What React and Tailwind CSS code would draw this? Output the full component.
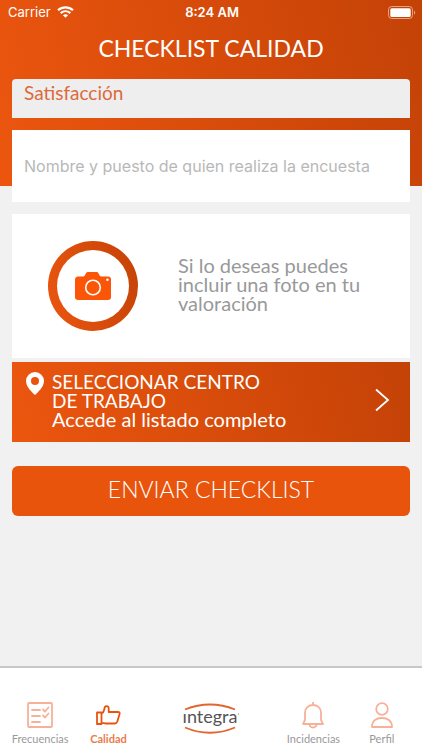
import { useState } from 'react';
import clsx from 'clsx';

const WifiIcon = () => (
  <svg width="17" height="12" viewBox="0 0 17 12" fill="none" stroke="currentColor" strokeWidth="2.2" aria-hidden="true">
    <path d="M1 4.2C5.2.3 11.8.3 16 4.2" />
    <path d="M3.7 7.1c2.8-2.5 6.8-2.5 9.6 0" />
    <path d="M8.5 11.8 5.9 9.2c1.5-1.3 3.7-1.3 5.2 0z" fill="currentColor" stroke="none" />
  </svg>
);

const BatteryIcon = () => (
  <svg width="28" height="13" viewBox="0 0 28 13" fill="none" aria-hidden="true">
    <rect x=".5" y=".5" width="24" height="12" rx="3.2" stroke="#fff" strokeOpacity=".5" />
    <rect x="2.3" y="2.3" width="20.4" height="8.6" rx="1.5" fill="#fff" />
    <path d="M26 4.4c1.6.6 1.6 3.6 0 4.2z" fill="#fff" fillOpacity=".5" />
  </svg>
);

const CameraIcon = () => (
  <svg width="38" height="30" viewBox="0 0 38 30" aria-hidden="true">
    <path d="M3.5 5.5H9c1.2 0 1.7-.7 2.200-1.700l.7-1.500C12.500 1.300 13.300 1 14.300 1h7.900c1 0 1.800.4 2.300 1.300l.8 1.500c.5 1 1 1.700 2.200 1.700h6.700A3 3 0 0 1 37 8.500V26a3 3 0 0 1-3 3H4a3 3 0 0 1-3-3V8.500a3 3 0 0 1 2.500-3z" fill="#fb5607" />
    <circle cx="19" cy="16.5" r="7.3" fill="none" stroke="#fff" strokeWidth="1.6" />
    <circle cx="33.5" cy="8.8" r="1.3" fill="#fff" />
  </svg>
);

const PinIcon = () => (
  <svg width="18" height="24" viewBox="0 0 18 24" className="shrink-0" aria-hidden="true">
    <path fill="#fff" fillRule="evenodd" d="M9 0a9 9 0 0 0-9 9c0 6.200 6.500 11.500 9 14 2.500-2.500 9-7.800 9-14a9 9 0 0 0-9-9zm0 5a4 4 0 1 1 0 8 4 4 0 0 1 0-8z" />
  </svg>
);

const ListIcon = () => (
  <svg width="26" height="26" viewBox="0 0 26 26" fill="none" stroke="currentColor" strokeWidth="1.8" strokeLinecap="round" strokeLinejoin="round" aria-hidden="true">
    <rect x="1" y="1" width="24" height="24" rx="1" />
    <path d="M5 8h8M5 14h8M5 20h8M16 7.500l2 2L21.500 5.500M16 13.500l2 2 3.500-4" />
  </svg>
);

const ThumbIcon = () => (
  <svg width="26" height="26" viewBox="0 0 26 26" fill="none" stroke="currentColor" strokeWidth="1.8" strokeLinejoin="round" aria-hidden="true">
    <path d="M2 10.500h4.500v11.500H2zM6.500 11.500C9 10.500 9 9 9.500 6.500c.3-3.400 4-3 4.200-.2V10H23c1.500 0 2 .8 1.600 2l-2.300 7.500c-.5 1.500-1 2-2.500 2h-9c-1.500 0-2.300-.7-4.300-.7" />
  </svg>
);

const BellIcon = () => (
  <svg width="24" height="28" viewBox="0 0 24 28" fill="none" stroke="currentColor" strokeWidth="1.8" strokeLinejoin="round" aria-hidden="true">
    <path d="M12 1v3M2 23h20l-2-4v-7.500C20 7 16.500 4 12 4s-8 3-8 7.500V19zM8.500 23.500c.5 4 6.500 4 7 0" />
  </svg>
);

const UserIcon = () => (
  <svg width="24" height="26" viewBox="0 0 24 26" fill="none" stroke="currentColor" strokeWidth="1.8" strokeLinejoin="round" aria-hidden="true">
    <circle cx="12" cy="7" r="5.800" />
    <path d="M2 25c0-6 4-9 10-9s10 3 10 9z" />
  </svg>
);

const NavItem = ({ icon: Icon, label, href, active }) => (
  <a
    href={href}
    aria-current={active ? 'page' : undefined}
    className={clsx('flex flex-1 flex-col items-center', active ? 'text-[#e8540f]' : 'text-[#f7b199]')}
  >
    <span className="flex h-7 items-center"><Icon /></span>
    <span className={clsx('mt-1 text-[11px] leading-3', active ? 'font-bold text-[#e97c4d]' : 'text-[#999]')}>{label}</span>
  </a>
);

const App = () => {
  const [name, setName] = useState('');

  return (
    <div className="flex min-h-screen flex-col bg-[#f1f1f1] font-['Lato',sans-serif]">
      {/* Header */}
      <header className="h-[186px] bg-linear-75 from-[#ec560f] to-[#c44207] text-white">
        <div className="grid h-6 grid-cols-3 items-center pl-2 pr-1.5 font-['Inter',sans-serif] text-[13px] leading-6">
          <span className="flex items-center gap-1.5">Carrier <WifiIcon /></span>
          <span className="text-center font-semibold">8:24 AM</span>
          <span className="flex justify-end"><BatteryIcon /></span>
        </div>
        <h1 className="mt-2.5 text-center text-[23px] leading-7">CHECKLIST CALIDAD</h1>
      </header>

      <main className="-mt-[107px] flex flex-1 flex-col px-3 pb-6">
        <section className="h-[39px] rounded-t bg-[#eee] px-3">
          <h2 className="pt-1 text-[19px] leading-5 text-[#dc6a3a]">Satisfacción</h2>
        </section>

        <input
          type="text"
          aria-label="Nombre y puesto de quien realiza la encuesta"
          placeholder="Nombre y puesto de quien realiza la encuesta"
          value={name}
          onChange={(e) => setName(e.target.value)}
          className="mt-3 h-[72px] w-full bg-white px-3 font-['Inter',sans-serif] text-[16px] text-gray-700 outline-none placeholder:text-[#b8b8b8]"
        />

        {/* Photo */}
        <section className="mt-3 flex h-36 items-center bg-white pl-9 pr-3">
          <button
            type="button"
            aria-label="Incluir una foto"
            className="size-[90px] shrink-0 rounded-full bg-linear-75 from-[#ec560f] to-[#c44207] p-[9px]"
          >
            <span className="flex size-full items-center justify-center rounded-full bg-white"><CameraIcon /></span>
          </button>
          <p className="ml-10 pb-1 text-[20px] leading-[19px] text-[#999]">
            Si lo deseas puedes<br />incluir una foto en tu<br />valoración
          </p>
        </section>

        <button
          type="button"
          className="mt-1 flex h-20 items-start bg-linear-75 from-[#ec560f] to-[#c44207] pl-3.5 pr-5 pt-2.5 text-left text-[19px] leading-[19px] text-white"
        >
          <PinIcon />
          <span className="ml-2 flex-1">
            <span className="block">SELECCIONAR CENTRO<br />DE TRABAJO</span>
            <span className="block text-[20px]">Accede al listado completo</span>
          </span>
          <svg width="16" height="24" viewBox="0 0 16 24" className="mt-4" fill="none" stroke="#fff" strokeWidth="1.8" aria-hidden="true">
            <path d="m2 1.500 12 10.500L2 22.500" />
          </svg>
        </button>

        <button type="button" className="mt-6 h-[50px] rounded-md bg-[#e9540d] pb-1 text-[23px] font-light text-white">
          ENVIAR CHECKLIST
        </button>
      </main>

      {/* Tab bar */}
      <nav className="flex h-[84px] items-start border-t-2 border-[#c8c8c8] bg-white px-1.5 pt-[33px]">
        <NavItem icon={ListIcon} label="Frecuencias" href="#frecuencias" />
        <NavItem icon={ThumbIcon} label="Calidad" href="#calidad" active />
        <a href="#inicio" aria-label="integra" className="flex flex-2 justify-center">
          <svg width="58" height="34" viewBox="0 0 58 34" aria-hidden="true">
            <path d="M3 8.500Q28-1.500 53 8.500M3 26.500Q28 37 53 26.500" fill="none" stroke="#e2642e" strokeWidth="1.8" />
            <text x="28" y="22" textAnchor="middle" fontSize="18" fill="#555">ıntegra</text>
            <circle cx="56.500" cy="13" r=".8" fill="#aaa" />
          </svg>
        </a>
        <NavItem icon={BellIcon} label="Incidencias" href="#incidencias" />
        <NavItem icon={UserIcon} label="Perfil" href="#perfil" />
      </nav>
    </div>
  );
};

export default App;
